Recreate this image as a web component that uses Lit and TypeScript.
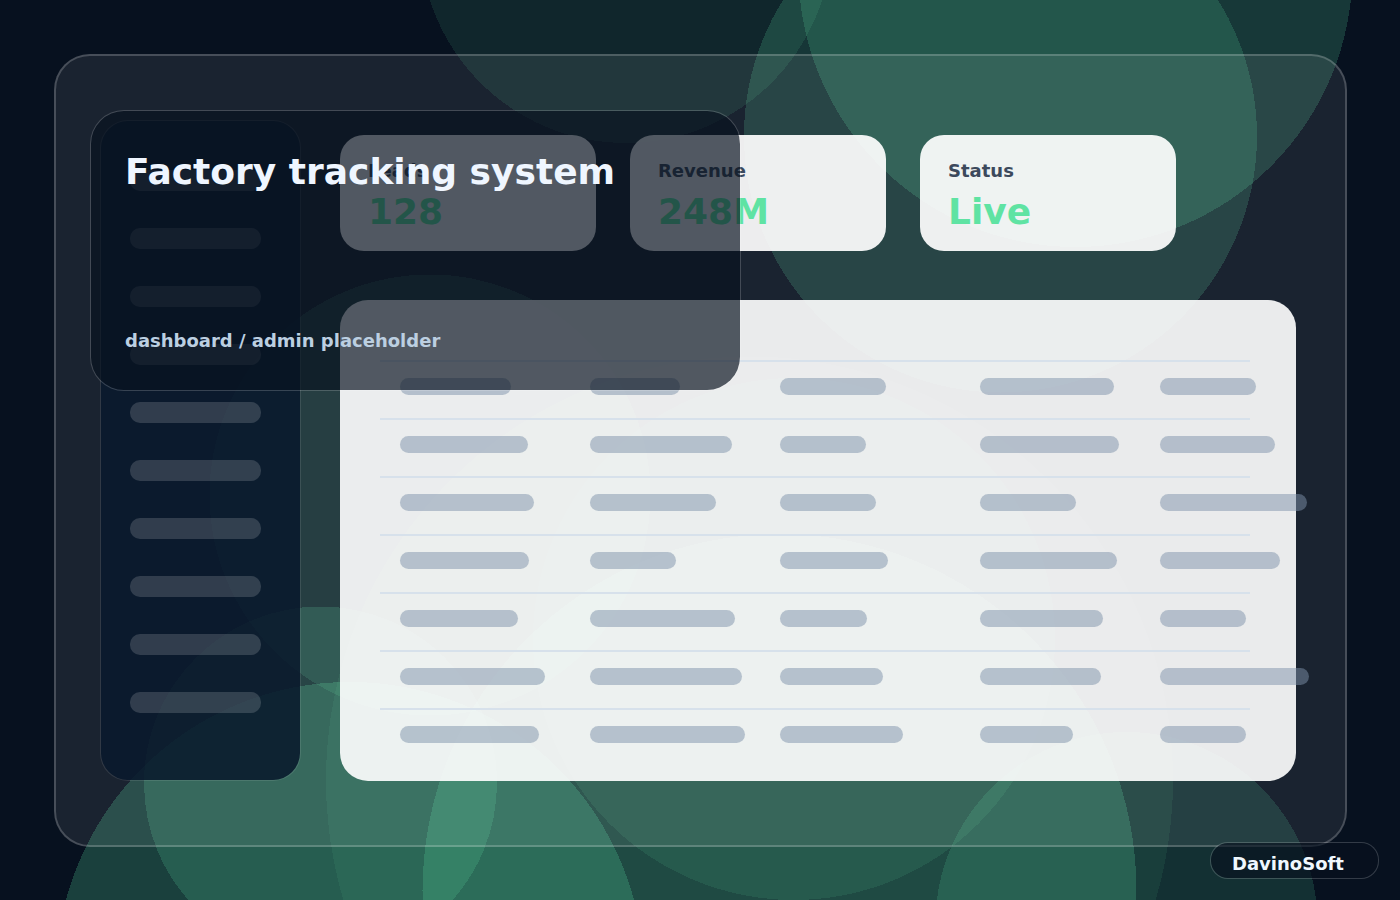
import { LitElement, html, css, svg } from "lit";
import { customElement } from "lit/decorators.js";

interface Orb {
  cx: number;
  cy: number;
  r: number;
  alpha: number;
}

const ORBS: Orb[] = [
  { cx: 626, cy: -63, r: 206, alpha: 0.1 },
  { cx: 1075.5, cy: -30, r: 277, alpha: 0.19 },
  { cx: 1000.5, cy: 136, r: 256.5, alpha: 0.18 },
  { cx: 430, cy: 495, r: 220.5, alpha: 0.14 },
  { cx: 350, cy: 976, r: 294, alpha: 0.225 },
  { cx: 320.5, cy: 783, r: 176.5, alpha: 0.18 },
  { cx: 749.5, cy: 780, r: 423.5, alpha: 0.08 },
  { cx: 779.5, cy: 891, r: 357, alpha: 0.21 },
  { cx: 794, cy: 639, r: 261, alpha: 0.11 },
  { cx: 1126.5, cy: 923, r: 191, alpha: 0.15 },
];

const STATS = [
  { label: "Leads", value: "128" },
  { label: "Revenue", value: "248M" },
  { label: "Status", value: "Live" },
];

const ROWS = [
  [111, 90, 106, 134, 96],
  [128, 142, 86, 139, 115],
  [134, 126, 96, 96, 147],
  [129, 86, 108, 137, 120],
  [118, 145, 87, 123, 86],
  [145, 152, 103, 121, 149],
  [139, 155, 123, 93, 86],
];

const NAV_ITEMS = Array.from({ length: 10 }, (_, i) => i);

@customElement("app-root")
export class AppRoot extends LitElement {
  static styles = css`
    :host {
      display: block;
      position: relative;
      box-sizing: border-box;
      min-height: 100vh;
      padding: 54px 53px 53px 54px;
      overflow: hidden;
      background: #07111f;
      font-family: "DejaVu Sans", sans-serif;
      font-weight: 700;
    }
    .orbs {
      position: absolute;
      inset: 0;
      width: 100%;
      height: 100%;
      fill: #60e4a7;
      shape-rendering: crispEdges;
    }
    .frame {
      position: relative;
      display: grid;
      grid-template-columns: 201px 1fr;
      gap: 39px;
      padding: 64px 49px 64px 44px;
      border: 2px solid rgba(255, 255, 255, 0.26);
      border-radius: 36px;
      background: rgba(255, 255, 255, 0.08) padding-box;
    }
    .sidebar {
      display: flex;
      flex-direction: column;
      gap: 37px;
      padding: 49px 39px 49px 29px;
      border: 1px solid rgba(255, 255, 255, 0.1);
      border-radius: 28px;
      background: rgba(9, 25, 44, 0.88) padding-box;
    }
    .nav-item {
      height: 21px;
      border-radius: 10px;
      background: rgba(255, 255, 255, 0.155);
    }
    .main {
      display: flex;
      flex-direction: column;
      gap: 49px;
      padding-top: 15px;
      min-width: 0;
    }
    .stats {
      display: grid;
      grid-template-columns: repeat(3, 1fr);
      gap: 34px;
      margin: 0;
      padding-right: 120px;
    }
    .stat {
      box-sizing: border-box;
      height: 116px;
      padding: 25px 28px;
      border-radius: 24px;
      background: rgba(255, 255, 255, 0.92);
    }
    .stat-label {
      font-size: 18px;
      line-height: 22px;
      color: #3c495c;
    }
    .stat-value {
      margin: 8px 0 0;
      font-size: 36px;
      line-height: 44px;
      color: #5fe3a3;
    }
    .panel {
      padding: 60px 46px 15px 40px;
      border-radius: 28px;
      background: rgba(255, 255, 255, 0.91);
    }
    .grid {
      width: 100%;
      table-layout: fixed;
      border-collapse: separate;
      border-spacing: 0;
    }
    .col-a {
      width: 210px;
    }
    .col-b {
      width: 190px;
    }
    .col-c {
      width: 200px;
    }
    .col-d {
      width: 180px;
    }
    .cell {
      box-sizing: border-box;
      height: 58px;
      padding: 16px 0 0;
      border-top: 2px solid #d7e1eb;
      vertical-align: top;
    }
    .cell:first-child {
      padding-left: 20px;
    }
    .bar {
      height: 17px;
      border-radius: 9px;
      background: rgba(126, 145, 170, 0.5);
    }
    .hero {
      position: absolute;
      top: 110px;
      left: 90px;
      box-sizing: border-box;
      width: 651px;
      height: 281px;
      display: flex;
      flex-direction: column;
      justify-content: space-between;
      padding: 39px 34px 38px;
      border: 1px solid rgba(255, 255, 255, 0.18);
      border-radius: 34px;
      background: rgba(7, 17, 31, 0.68) padding-box;
    }
    .title {
      margin: 0;
      font-size: 36px;
      line-height: 44px;
      color: #eff6ff;
    }
    .subtitle {
      margin: 0;
      font-size: 18px;
      line-height: 22px;
      color: #bccfe1;
    }
    .badge {
      position: absolute;
      right: 21px;
      bottom: 21px;
      box-sizing: border-box;
      width: 169px;
      height: 37px;
      padding: 0 21px;
      border: 1px solid rgba(255, 255, 255, 0.18);
      border-radius: 18px;
      background: rgba(7, 17, 31, 0.65) padding-box;
      font-size: 18px;
      line-height: 41px;
      color: #f0f8ff;
    }
  `;

  render() {
    return html`
      <svg
        class="orbs"
        viewBox="0 0 1400 900"
        preserveAspectRatio="xMidYMid slice"
        aria-hidden="true"
      >
        ${ORBS.map(
          (o) =>
            svg`<circle cx=${o.cx} cy=${o.cy} r=${o.r} fill-opacity=${o.alpha}></circle>`
        )}
      </svg>
      <div class="frame">
        <nav class="sidebar">
          ${NAV_ITEMS.map(() => html`<div class="nav-item"></div>`)}
        </nav>
        <main class="main">
          <dl class="stats">
            ${STATS.map(
              (s) => html`
                <div class="stat">
                  <dt class="stat-label">${s.label}</dt>
                  <dd class="stat-value">${s.value}</dd>
                </div>
              `
            )}
          </dl>
          <section class="panel">
            <table class="grid">
              <colgroup>
                <col class="col-a" />
                <col class="col-b" />
                <col class="col-c" />
                <col class="col-d" />
                <col />
              </colgroup>
              <tbody>
                ${ROWS.map(
                  (row) => html`
                    <tr>
                      ${row.map(
                        (w) => html`<td class="cell">
                          <div class="bar" style="width:${w}px"></div>
                        </td>`
                      )}
                    </tr>
                  `
                )}
              </tbody>
            </table>
          </section>
        </main>
      </div>
      <header class="hero">
        <h1 class="title">Factory tracking system</h1>
        <p class="subtitle">dashboard / admin placeholder</p>
      </header>
      <footer class="badge">DavinoSoft</footer>
    `;
  }
}
